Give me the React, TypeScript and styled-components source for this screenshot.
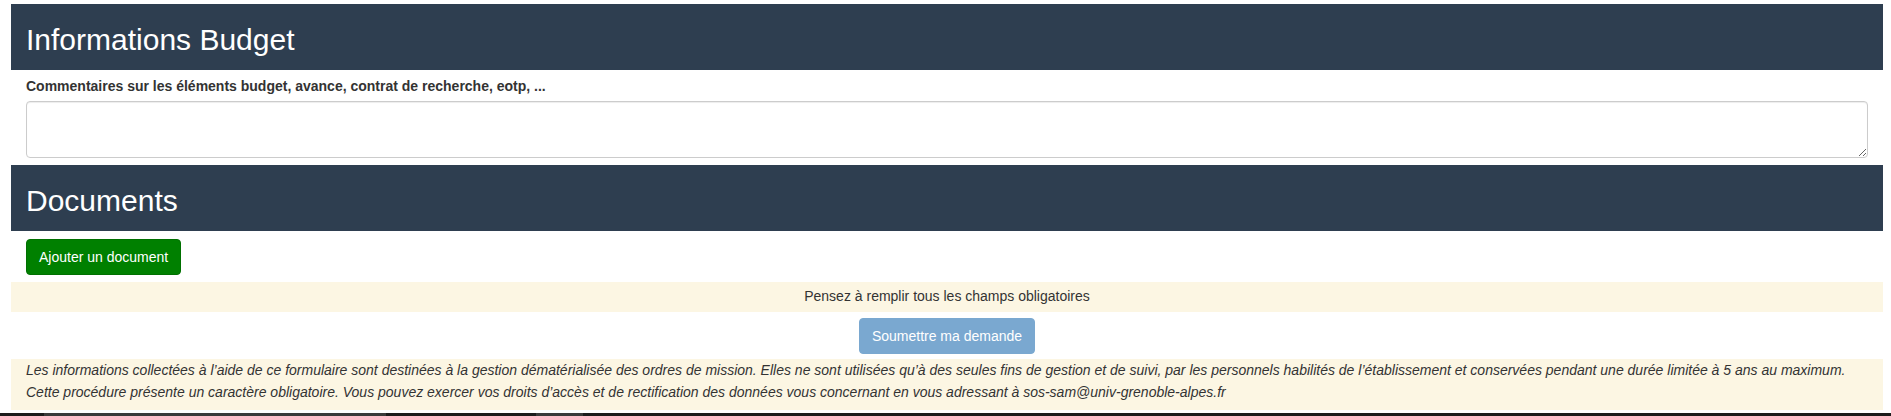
import React from "react";
import styled, { createGlobalStyle } from "styled-components";

const Global = createGlobalStyle`
  * { box-sizing: border-box; }
  html, body { margin: 0; padding: 0; background: #fff; }
  body {
    font-family: "Liberation Sans", Arial, Helvetica, sans-serif;
    font-size: 14px;
    line-height: 1.42857;
    color: #333;
    overflow: hidden;
  }
`;

const Page = styled.div`
  padding: 4px 8px 0 11px;
  display: flex;
  flex-direction: column;
  height: 416px;
`;

const SectionHeader = styled.div`
  background: #2e3e50;
  height: 66px;
  padding: 19px 15px 0;
`;

const Title = styled.h2`
  margin: 0;
  font-size: 30px;
  font-weight: 400;
  line-height: 33px;
  color: #fff;
`;

const FieldGroup = styled.div`
  padding: 7px 15px 0;
  display: flex;
  flex-direction: column;
  gap: 5px;
`;

const Label = styled.label`
  font-size: 14px;
  font-weight: 700;
  line-height: 19px;
  color: #333;
`;

const TextArea = styled.textarea`
  display: block;
  width: 100%;
  height: 57px;
  border: 1px solid #ccc;
  border-radius: 4px;
  box-shadow: inset 0 1px 1px rgba(0, 0, 0, 0.075);
  resize: vertical;
  font-family: inherit;
  font-size: 14px;
  padding: 6px 12px;
  margin-bottom: 7px;
`;

const ButtonRow = styled.div<{ $center?: boolean }>`
  display: flex;
  justify-content: ${(p) => (p.$center ? "center" : "flex-start")};
  padding: ${(p) => (p.$center ? "6px 0 5px" : "8px 15px 7px")};
`;

const Button = styled.button<{ $variant: "success" | "primary" }>`
  font-family: inherit;
  font-size: 14px;
  line-height: 20px;
  height: 36px;
  padding: 7px 12px;
  border-radius: 4px;
  color: #fff;
  cursor: pointer;
  border: 1px solid
    ${(p) => (p.$variant === "success" ? "#007000" : "#7aa8d0")};
  background: ${(p) => (p.$variant === "success" ? "#008000" : "#7aa8d0")};
`;

const Notice = styled.div`
  background: #fcf6e3;
  height: 30px;
  display: flex;
  align-items: center;
  justify-content: center;
  font-size: 14px;
  color: #333;
`;

const Legal = styled.div`
  background: #fcf6e3;
  height: 51px;
  padding: 0 15px;
  font-style: italic;
  font-size: 14px;
  line-height: 22px;
  color: #333;
  p {
    margin: 0;
    white-space: nowrap;
  }
`;

const BottomBar = styled.div`
  margin: 3px -8px 0 -11px;
  height: 3px;
  background: #1c1c1c;
  display: flex;
`;

const BarSegment = styled.div<{ $w: number; $ml: number }>`
  width: ${(p) => p.$w}px;
  margin-left: ${(p) => p.$ml}px;
  background: #3a3a3a;
`;

export default function App() {
  return (
    <>
      <Global />
      <Page>
        <SectionHeader>
          <Title>Informations Budget</Title>
        </SectionHeader>
        <FieldGroup>
          <Label>Commentaires sur les éléments budget, avance, contrat de recherche, eotp, ...</Label>
          <TextArea />
        </FieldGroup>
        <SectionHeader>
          <Title>Documents</Title>
        </SectionHeader>
        <ButtonRow>
          <Button $variant="success">Ajouter un document</Button>
        </ButtonRow>
        <Notice>Pensez à remplir tous les champs obligatoires</Notice>
        <ButtonRow $center>
          <Button $variant="primary">Soumettre ma demande</Button>
        </ButtonRow>
        <Legal>
          <p>
            Les informations collectées à l’aide de ce formulaire sont destinées à la gestion dématérialisée des ordres de mission. Elles ne sont utilisées qu’à des seules fins de gestion et de suivi, par les personnels habilités de l’établissement et conservées pendant une durée limitée à 5 ans au maximum.
          </p>
          <p>
            Cette procédure présente un caractère obligatoire. Vous pouvez exercer vos droits d’accès et de rectification des données vous concernant en vous adressant à sos-sam@univ-grenoble-alpes.fr
          </p>
        </Legal>
        <BottomBar>
          <BarSegment $w={342} $ml={44} />
          <BarSegment $w={47} $ml={150} />
        </BottomBar>
      </Page>
    </>
  );
}
